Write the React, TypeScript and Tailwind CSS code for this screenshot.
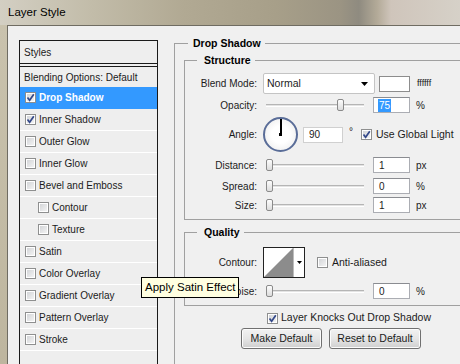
import React from "react";

const items = [
  { label: "Drop Shadow", on: true, active: true },
  { label: "Inner Shadow", on: true },
  { label: "Outer Glow" },
  { label: "Inner Glow" },
  { label: "Bevel and Emboss" },
  { label: "Contour", indent: true },
  { label: "Texture", indent: true },
  { label: "Satin" },
  { label: "Color Overlay" },
  { label: "Gradient Overlay" },
  { label: "Pattern Overlay" },
  { label: "Stroke" },
];

function Check({ on }: { on?: boolean }) {
  return (
    <span className="flex h-[11px] w-[11px] shrink-0 items-center justify-center border border-[#8e8f8f] bg-gradient-to-br from-[#cfd1d4] to-[#f7f7f7] shadow-[inset_0_0_0_1px_#fff]">
      {on && (
        <svg width="9" height="9" viewBox="0 0 9 9">
          <path
            d="M1.5 4.5 L3.6 7.2 L7.8 1.2"
            stroke="#34498a"
            strokeWidth="1.7"
            fill="none"
          />
        </svg>
      )}
    </span>
  );
}

function Label({ children }: { children: React.ReactNode }) {
  return (
    <span className="w-[73px] shrink-0 pr-[1px] text-right">{children}</span>
  );
}

function Slider({ at }: { at: number }) {
  return (
    <div className="relative ml-[5px] h-[16px] w-[104px] shrink-0">
      <div className="absolute left-[3px] right-[3px] top-[7px] h-[3px] border-t border-[#b5b5b5] border-b border-b-white bg-[#e3e3e3]" />
      <div
        className="absolute top-[2px] h-[12px] w-[7px] rounded-[2px] border border-[#8a8a8a] bg-gradient-to-b from-[#fdfdfd] to-[#dcdcdc]"
        style={{ left: at }}
      />
    </div>
  );
}

function Field({ value, sel }: { value: string; sel?: boolean }) {
  return (
    <div className="ml-[6px] flex h-[16px] w-[37px] shrink-0 items-center border border-[#abadb3] border-t-[#8a8c91] bg-white pl-[4px]">
      {sel ? (
        <span className="bg-[#3399ff] px-[1px] leading-[13px] text-white">
          {value}
        </span>
      ) : (
        <span className="pl-[1px]">{value}</span>
      )}
    </div>
  );
}

function Unit({ children }: { children: React.ReactNode }) {
  return <span className="ml-[6px]">{children}</span>;
}

export default function App() {
  return (
    <div className="relative flex h-[364px] w-[460px] flex-col overflow-hidden font-['Liberation_Sans',Arial,sans-serif] text-[10px] text-[#1b1b1b]">
      <div className="flex h-[25px] shrink-0 items-center bg-[linear-gradient(90deg,#d3cfc3_0%,#c2bca9_20%,#b1a993_40%,#a79f89_60%,#9b9483_74%,#8f8b80_78%,#b3aa98_82%,#cfc5bb_85%,#d6d1c8_100%)] pl-[8px] text-[11.5px] text-black">
        Layer Style
      </div>

      <div className="flex flex-1">
        <div className="w-[7px] shrink-0 bg-gradient-to-b from-[#c9c2ad] to-[#bdb59e]" />
        <div className="flex flex-1 border-l border-t border-[#6f6c62] bg-[#f0f0f0] pl-[11px] pt-[14px]">
          {/* styles list */}
          <div className="h-[340px] w-[139px] shrink-0 border border-[#1a1a1a] bg-[#eeeeee]">
            <div className="flex h-[23px] items-center border-b border-[#1a1a1a] pl-[4px]">
              Styles
            </div>
            <div className="mt-[2px] flex h-[21px] items-center border-t border-[#1a1a1a] pl-[4px]">
              Blending Options: Default
            </div>
            {items.map((it) => (
              <div
                key={it.label}
                className={`flex h-[22px] items-center gap-[3px] border-b ${
                  it.active
                    ? "border-[#3399ff] bg-[#3399ff] font-bold text-white"
                    : "border-white"
                } ${it.indent ? "pl-[18px]" : "pl-[5px]"}`}
              >
                <Check on={it.on} />
                <span>{it.label}</span>
              </div>
            ))}
          </div>

          {/* settings */}
          <fieldset className="-mt-[3px] ml-[16px] h-[340px] w-[300px] shrink-0 border border-[#a0a0a0] pl-[9px]">
            <legend className="ml-[4px] pl-[5px] pr-[4px] text-[10.5px] font-bold leading-[13px] text-black">
              Drop Shadow
            </legend>

            <fieldset className="mt-[4px] w-[300px] border border-[#a0a0a0] pb-[6px]">
              <legend className="ml-[12px] pl-[7px] pr-[4px] text-[10.5px] font-bold leading-[13px] text-black">
                Structure
              </legend>

              <div className="mt-[6px] flex h-[21px] items-center">
                <Label>Blend Mode:</Label>
                <div className="ml-[5px] flex h-[21px] w-[112px] items-center justify-between rounded-[2px] border border-[#c4c4c4] bg-white pl-[3px] pr-[6px] text-[10.5px]">
                  <span>Normal</span>
                  <svg width="7" height="4" viewBox="0 0 7 4">
                    <path d="M0 0 H7 L3.5 4 Z" fill="#000" />
                  </svg>
                </div>
                <div className="ml-[4px] h-[16px] w-[31px] border border-[#8d8d8d] bg-white" />
                <span className="ml-[7px] text-[9px]">ffffff</span>
              </div>

              <div className="mt-[3px] flex h-[16px] items-center">
                <Label>Opacity:</Label>
                <Slider at={74} />
                <Field value="75" sel />
                <Unit>%</Unit>
              </div>

              <div className="mt-[4px] flex h-[35px] items-center">
                <Label>Angle:</Label>
                <div className="relative ml-[5px] h-[35px] w-[35px] shrink-0 rounded-full border-2 border-[#5a6d98] bg-[radial-gradient(circle,#ffffff_40%,#e8e8e8_100%)]">
                  <div className="absolute left-[15px] top-0 h-[16px] w-[1.5px] bg-black" />
                  <div className="absolute left-[14px] top-[14px] h-[3px] w-[3px] bg-black" />
                </div>
                <div className="ml-[5px] flex h-[16px] w-[40px] items-center border border-[#d0d0d0] bg-white pl-[5px]">
                  90
                </div>
                <span className="mb-[6px] ml-[6px]">°</span>
                <span className="ml-[8px] flex items-center gap-[4px]">
                  <Check on />
                  <span className="text-[10.5px]">Use Global Light</span>
                </span>
              </div>

              <div className="mt-[5px] flex h-[16px] items-center">
                <Label>Distance:</Label>
                <Slider at={3} />
                <Field value="1" />
                <Unit>px</Unit>
              </div>

              <div className="mt-[5px] flex h-[16px] items-center">
                <Label>Spread:</Label>
                <Slider at={3} />
                <Field value="0" />
                <Unit>%</Unit>
              </div>

              <div className="mt-[3px] flex h-[16px] items-center">
                <Label>Size:</Label>
                <Slider at={3} />
                <Field value="1" />
                <Unit>px</Unit>
              </div>
            </fieldset>

            <fieldset className="mt-[6px] w-[300px] border border-[#a0a0a0] pb-[6px]">
              <legend className="ml-[12px] pl-[7px] pr-[4px] text-[10.5px] font-bold leading-[13px] text-black">
                Quality
              </legend>

              <div className="mt-[8px] flex h-[31px] items-center">
                <Label>Contour:</Label>
                <div className="ml-[5px] flex h-[31px] w-[42px] border border-[#222] bg-white">
                  <svg width="29" height="29" viewBox="0 0 29 29">
                    <path d="M0 29 L29 0 V29 Z" fill="#8c8c8c" />
                  </svg>
                  <div className="flex flex-1 items-center justify-center border-l border-[#bdbdbd]">
                    <svg width="5" height="3" viewBox="0 0 5 3">
                      <path d="M0 0 H5 L2.5 3 Z" fill="#000" />
                    </svg>
                  </div>
                </div>
                <span className="ml-[12px] flex items-center gap-[4px]">
                  <Check />
                  <span className="text-[10.5px]">Anti-aliased</span>
                </span>
              </div>

              <div className="mt-[5px] flex h-[16px] items-center">
                <Label>Noise:</Label>
                <Slider at={3} />
                <Field value="0" />
                <Unit>%</Unit>
              </div>
            </fieldset>

            <div className="ml-[83px] mt-[6px] flex h-[12px] items-center gap-[3px] text-[10.5px]">
              <Check on />
              <span>Layer Knocks Out Drop Shadow</span>
            </div>

            <div className="mt-[4px] flex text-[10.5px]">
              <button className="ml-[57px] h-[21px] w-[81px] rounded-[3px] border border-[#707070] bg-gradient-to-b from-[#f2f2f2] via-[#e6e6e6] to-[#cfcfcf] shadow-[inset_0_0_0_1px_#fcfcfc]">
                Make Default
              </button>
              <button className="ml-[7px] h-[21px] w-[92px] rounded-[3px] border border-[#707070] bg-gradient-to-b from-[#f2f2f2] via-[#e6e6e6] to-[#cfcfcf] shadow-[inset_0_0_0_1px_#fcfcfc]">
                Reset to Default
              </button>
            </div>
          </fieldset>
        </div>
      </div>

      <div className="absolute left-[141px] top-[277px] flex h-[21px] w-[98px] items-center border border-black bg-[#ffffe1] pl-[3px] text-[11.5px] text-black">
        Apply Satin Effect
      </div>
    </div>
  );
}
